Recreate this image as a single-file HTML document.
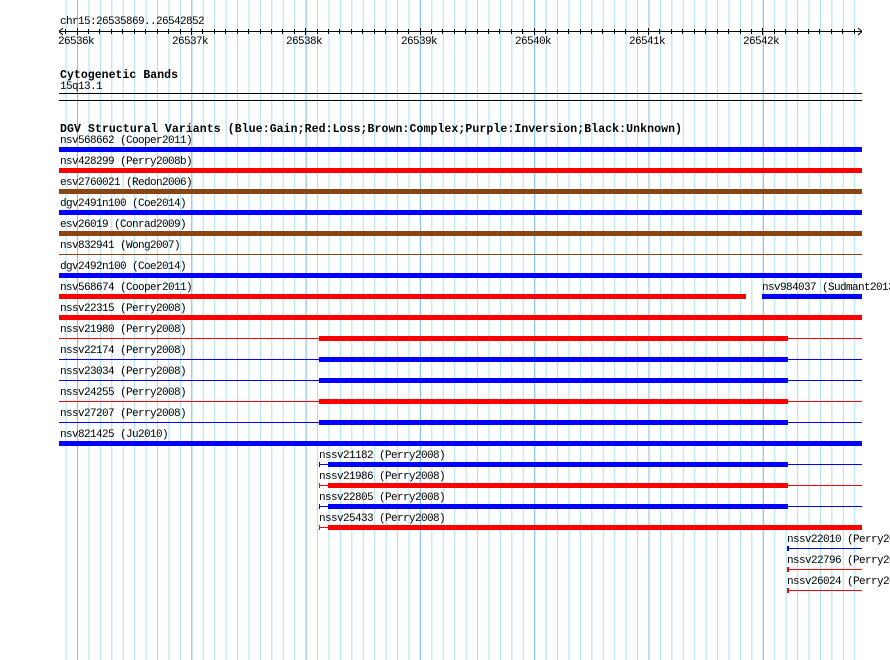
<!DOCTYPE html>
<html><head><style>body{margin:0;background:#fff}svg{display:block}text{font-family:"Liberation Mono",monospace;font-size:11px;letter-spacing:-0.6px;fill:#000}</style></head>
<body>
<svg width="890" height="660" xmlns="http://www.w3.org/2000/svg" shape-rendering="crispEdges">
<defs>
<pattern id="g" x="65.57" y="0" width="11.43" height="660" patternUnits="userSpaceOnUse">
<rect x="0" y="0" width="1" height="660" fill="#a8e2f0"/>
</pattern>
<pattern id="G" x="77" y="0" width="114.3" height="660" patternUnits="userSpaceOnUse">
<rect x="0" y="0" width="1" height="660" fill="#80bfe6"/>
</pattern>
</defs>
<rect x="59" y="0" width="804" height="660" fill="url(#g)"/>
<rect x="59" y="0" width="804" height="660" fill="url(#G)"/>

<text x="60" y="24">chr15:26535869..26542852</text>
<rect x="59" y="31" width="803" height="1" fill="#000"/>
<path d="M59 31.5 L63 28 M59 31.5 L63 35 M862 31.5 L858 28 M862 31.5 L858 35" stroke="#000" fill="none"/>
<g fill="#000">
<rect x="77" y="28" width="1" height="7"/><rect x="191" y="28" width="1" height="7"/><rect x="305" y="28" width="1" height="7"/><rect x="420" y="28" width="1" height="7"/><rect x="534" y="28" width="1" height="7"/><rect x="648" y="28" width="1" height="7"/><rect x="762" y="28" width="1" height="7"/>
</g>
<g stroke="#000">
<path d="M65.5 29v5M88.5 29v5M99.5 29v5M111.5 29v5M122.5 29v5M134.5 29v5M145.5 29v5M157.5 29v5M168.5 29v5M180.5 29v5M202.5 29v5M214.5 29v5M225.5 29v5M237.5 29v5M248.5 29v5M260.5 29v5M271.5 29v5M282.5 29v5M294.5 29v5M317.5 29v5M328.5 29v5M339.5 29v5M351.5 29v5M362.5 29v5M374.5 29v5M385.5 29v5M397.5 29v5M408.5 29v5M431.5 29v5M442.5 29v5M454.5 29v5M465.5 29v5M477.5 29v5M488.5 29v5M499.5 29v5M511.5 29v5M522.5 29v5M545.5 29v5M557.5 29v5M568.5 29v5M580.5 29v5M591.5 29v5M602.5 29v5M614.5 29v5M625.5 29v5M637.5 29v5M659.5 29v5M671.5 29v5M682.5 29v5M694.5 29v5M705.5 29v5M717.5 29v5M728.5 29v5M740.5 29v5M751.5 29v5M774.5 29v5M785.5 29v5M797.5 29v5M808.5 29v5M819.5 29v5M831.5 29v5M842.5 29v5M854.5 29v5"/>
</g>
<text x="58" y="44">26536k</text><text x="172" y="44">26537k</text><text x="286" y="44">26538k</text><text x="401" y="44">26539k</text><text x="515" y="44">26540k</text><text x="629" y="44">26541k</text><text x="743" y="44">26542k</text>

<text x="60" y="78" font-weight="bold" style="font-size:11.5px;letter-spacing:0" textLength="118">Cytogenetic Bands</text>
<text x="60" y="89">15q13.1</text>
<rect x="59" y="93" width="803" height="1" fill="#000"/>
<rect x="59" y="100" width="803" height="1" fill="#000"/>

<text x="60" y="132" font-weight="bold" style="font-size:11.5px;letter-spacing:0" textLength="622">DGV Structural Variants (Blue:Gain;Red:Loss;Brown:Complex;Purple:Inversion;Black:Unknown)</text>

<g>
<text x="60" y="143">nsv568662 (Cooper2011)</text>
<rect x="59" y="147" width="803" height="5" fill="#0000ff"/>
<text x="60" y="164">nsv428299 (Perry2008b)</text>
<rect x="59" y="168" width="803" height="5" fill="#ff0000"/>
<text x="60" y="185">esv2760021 (Redon2006)</text>
<rect x="59" y="189" width="803" height="5" fill="#8b4513"/>
<text x="60" y="206">dgv2491n100 (Coe2014)</text>
<rect x="59" y="210" width="803" height="5" fill="#0000ff"/>
<text x="60" y="227">esv26019 (Conrad2009)</text>
<rect x="59" y="231" width="803" height="5" fill="#8b4513"/>
<text x="60" y="248">nsv832941 (Wong2007)</text>
<rect x="59" y="254" width="803" height="1" fill="#8b4513"/>
<text x="60" y="269">dgv2492n100 (Coe2014)</text>
<rect x="59" y="273" width="803" height="5" fill="#0000ff"/>
<text x="60" y="290">nsv568674 (Cooper2011)</text>
<rect x="59" y="294" width="687" height="5" fill="#ff0000"/>
<text x="762" y="290">nsv984037 (Sudmant2013)</text>
<rect x="762" y="294" width="100" height="5" fill="#0000ff"/>
<text x="60" y="311">nssv22315 (Perry2008)</text>
<rect x="59" y="315" width="803" height="5" fill="#ff0000"/>

<text x="60" y="332">nssv21980 (Perry2008)</text>
<rect x="59" y="338" width="803" height="1" fill="#ff0000"/>
<rect x="319" y="336" width="469" height="5" fill="#ff0000"/>
<text x="60" y="353">nssv22174 (Perry2008)</text>
<rect x="59" y="359" width="803" height="1" fill="#0000ff"/>
<rect x="319" y="357" width="469" height="5" fill="#0000ff"/>
<text x="60" y="374">nssv23034 (Perry2008)</text>
<rect x="59" y="380" width="803" height="1" fill="#0000ff"/>
<rect x="319" y="378" width="469" height="5" fill="#0000ff"/>
<text x="60" y="395">nssv24255 (Perry2008)</text>
<rect x="59" y="401" width="803" height="1" fill="#ff0000"/>
<rect x="319" y="399" width="469" height="5" fill="#ff0000"/>
<text x="60" y="416">nssv27207 (Perry2008)</text>
<rect x="59" y="422" width="803" height="1" fill="#0000ff"/>
<rect x="319" y="420" width="469" height="5" fill="#0000ff"/>
<text x="60" y="437">nsv821425 (Ju2010)</text>
<rect x="59" y="441" width="803" height="5" fill="#0000ff"/>

<text x="319" y="458">nssv21182 (Perry2008)</text>
<rect x="319" y="462" width="1" height="5" fill="#0000ff"/><rect x="319" y="464" width="9" height="1" fill="#0000ff"/>
<rect x="328" y="462" width="460" height="5" fill="#0000ff"/><rect x="788" y="464" width="74" height="1" fill="#0000ff"/>
<text x="319" y="479">nssv21986 (Perry2008)</text>
<rect x="319" y="483" width="1" height="5" fill="#ff0000"/><rect x="319" y="485" width="9" height="1" fill="#ff0000"/>
<rect x="328" y="483" width="460" height="5" fill="#ff0000"/><rect x="788" y="485" width="74" height="1" fill="#ff0000"/>
<text x="319" y="500">nssv22805 (Perry2008)</text>
<rect x="319" y="504" width="1" height="5" fill="#0000ff"/><rect x="319" y="506" width="9" height="1" fill="#0000ff"/>
<rect x="328" y="504" width="460" height="5" fill="#0000ff"/><rect x="788" y="506" width="74" height="1" fill="#0000ff"/>
<text x="319" y="521">nssv25433 (Perry2008)</text>
<rect x="319" y="525" width="1" height="5" fill="#ff0000"/><rect x="319" y="527" width="9" height="1" fill="#ff0000"/>
<rect x="328" y="525" width="534" height="5" fill="#ff0000"/>

<text x="787" y="542">nssv22010 (Perry2008)</text>
<rect x="787" y="546" width="2" height="5" fill="#0000ff"/><rect x="787" y="548" width="75" height="1" fill="#0000ff"/>
<text x="787" y="563">nssv22796 (Perry2008)</text>
<rect x="787" y="567" width="2" height="5" fill="#ff0000"/><rect x="787" y="569" width="75" height="1" fill="#ff0000"/>
<text x="787" y="584">nssv26024 (Perry2008)</text>
<rect x="787" y="588" width="2" height="5" fill="#ff0000"/><rect x="787" y="590" width="75" height="1" fill="#ff0000"/>
</g>
</svg>
</body></html>
